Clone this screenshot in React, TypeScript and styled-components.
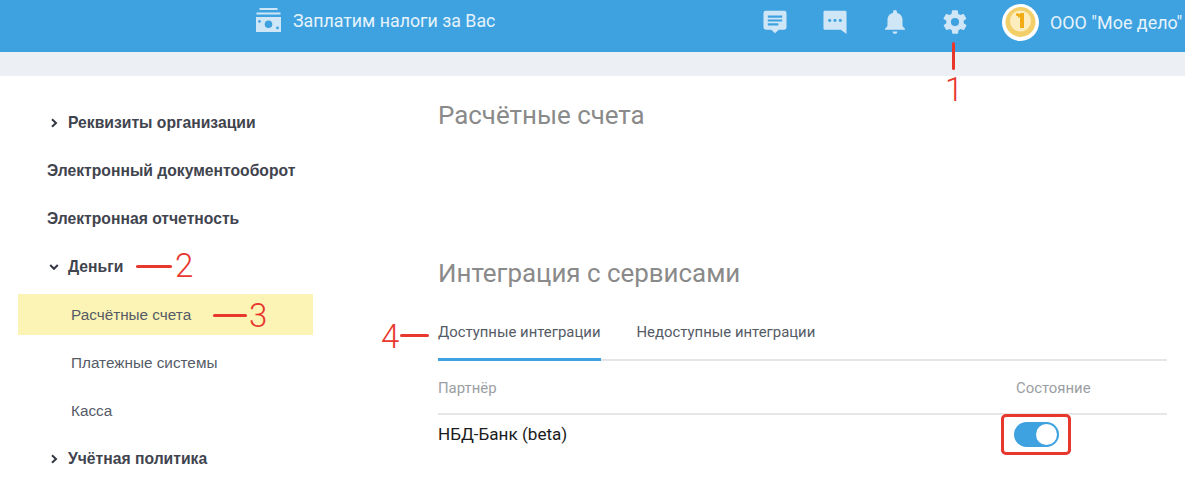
import React from "react";
import styled, { createGlobalStyle } from "styled-components";

const Global = createGlobalStyle`
  html, body { margin: 0; padding: 0; background: #fff; overflow: hidden; }
  body { font-family: "Liberation Sans", Arial, sans-serif; }
`;
const Page = styled.div`
  position: relative; width: 1185px; height: 485px; overflow: hidden; background: #fff;
`;
const Header = styled.header`
  height: 52px; background: #3ea2e0; display: flex; align-items: center; position: relative;
  box-sizing: border-box; padding-left: 256px; padding-bottom: 8px;
`;
const Promo = styled.div`
  display: flex; align-items: center; gap: 12px; width: 489px; flex: none; margin-bottom: 4px;
  color: #e6f3fb; font: 400 17.8px Roboto, sans-serif;
`;
const IconSlot = styled.div`
  width: 60px; display: flex; justify-content: center; align-items: center; height: 28px;
`;
const Icons = styled.div`
  display: flex; align-items: center;
`;
const Org = styled.div`
  display: flex; align-items: center; gap: 11px; margin-left: 17px; white-space: nowrap;
  color: #e6f3fb; font: 400 17.9px Roboto, sans-serif;
`;
const Strip = styled.div`
  height: 24px; background: #eceff3;
`;
const Body = styled.div`
  display: grid; grid-template-columns: 295px 729px; column-gap: 125px; padding-left: 18px;
`;
const Side = styled.nav`
  display: flex; flex-direction: column; padding-top: 23px;
`;
const NavRow = styled.div<{ $level: number; $active?: boolean; $caret?: boolean }>`
  height: 48px; display: flex; align-items: center; box-sizing: border-box;
  padding-left: ${(p) => (p.$level === 2 ? 53 : p.$caret ? 31 : 29)}px;
  color: ${(p) => (p.$level === 2 ? "#555b66" : "#3f444e")};
  font-size: ${(p) => (p.$level === 2 ? "15.3px" : "15.7px")};
  font-weight: ${(p) => (p.$level === 2 ? 400 : 700)};
  position: relative;
  ${(p) => p.$active && "&::before{content:'';position:absolute;left:0;right:0;top:3px;bottom:4px;background:#fbf4b5;} "}
  & > * { position: relative; }
`;
const Caret = styled.svg`
  width: 10px; height: 10px; margin-right: 9px; flex: none;
`;
const Main = styled.main`
  display: flex; flex-direction: column;
`;
const Title = styled.h2`
  margin: 0; font: 400 25.9px Roboto, sans-serif; color: #8a8a8a; line-height: 28px;
`;
const FirstTitle = styled(Title)`
  margin-top: 25px;
`;
const SecondTitle = styled(Title)`
  margin-top: 130px;
`;
const Tabs = styled.div`
  display: flex; gap: 36px; margin-top: 17px; border-bottom: 2px solid #e3e5e8; height: 57px; box-sizing: border-box;
`;
const Tab = styled.div<{ $active?: boolean }>`
  height: 57px; box-sizing: border-box; padding-top: 19px; font: 400 14.9px Roboto, sans-serif; color: #555b66;
  ${(p) => p.$active && "border-bottom: 3px solid #3ea2e0;"}
`;
const TableRow = styled.div<{ $head?: boolean }>`
  display: grid; grid-template-columns: 578px 1fr; align-items: center;
  height: ${(p) => (p.$head ? "54px" : "38px")};
  ${(p) => p.$head && "border-bottom: 2px solid #e6e7e9; box-sizing: border-box; padding-top: 2px; color: #9b9ea3; font: 400 14.9px Roboto, sans-serif;"}
`;
const Partner = styled.div`
  font: 400 17.1px Roboto, sans-serif; color: #1a1c20;
`;
const Toggle = styled.div`
  width: 45px; height: 25px; border-radius: 13px; background: #3ea2e0; position: relative; margin-left: -2px;
  &::after {
    content: ""; position: absolute; right: 2px; top: 2px; width: 21px; height: 21px; border-radius: 50%; background: #fff;
  }
`;
const Mark = styled.div`
  position: absolute; background: #e8382e; border-radius: 2px;
`;
const Line1 = styled(Mark)` left: 952px; top: 42px; width: 3px; height: 28px; `;
const Line2 = styled(Mark)` left: 136px; top: 265px; width: 36px; height: 3px; `;
const Line3 = styled(Mark)` left: 213px; top: 314px; width: 34px; height: 3px; `;
const Line4 = styled(Mark)` left: 400px; top: 334px; width: 29px; height: 3px; `;
const Num = styled.span<{ $x: number; $y: number }>`
  position: absolute; left: ${(p) => p.$x}px; top: ${(p) => p.$y}px;
  font: 300 33px/34px Roboto, sans-serif; color: #e8382e;
`;
const RedBox = styled.div`
  position: absolute; left: 1001px; top: 414px; width: 70px; height: 41px; box-sizing: border-box;
  border: 3px solid #e8382e; border-radius: 5px;
`;

const CaretRight = () => (
  <Caret viewBox="0 0 10 10"><path d="M3 1.2 7 5 3 8.8" fill="none" stroke="#333842" strokeWidth="2" /></Caret>
);
const CaretDown = () => (
  <Caret viewBox="0 0 10 10"><path d="M1.2 3 5 6.8 8.8 3" fill="none" stroke="#333842" strokeWidth="2" /></Caret>
);
const C = "#cfe6f6";

export default function App() {
  return (
    <Page>
      <Global />
      <Header>
        <Promo>
          <svg width="25" height="24" viewBox="0 0 25 24">
            <rect x="3.500" y="0" width="18" height="2" fill={C} />
            <rect x="0.500" y="4.500" width="24" height="2" fill={C} />
            <path fillRule="evenodd" fill={C} d="M0 9h25v15H0zM12.500 12.500a3.800 3.800 0 1 0 0 7.600 3.800 3.800 0 0 0 0-7.600zM3.500 12a1.400 1.400 0 1 0 0 2.800 1.400 1.400 0 0 0 0-2.800zM21.500 18.500a1.400 1.400 0 1 0 0 2.800 1.400 1.400 0 0 0 0-2.800z" />
          </svg>
          <span>Заплатим налоги за Вас</span>
        </Promo>
        <Icons>
          <IconSlot>
            <svg width="24" height="24" viewBox="0 0 25 28" preserveAspectRatio="none">
              <path fillRule="evenodd" fill={C} d="M3 1h19a2.500 2.500 0 0 1 2.500 2.500v17a2.500 2.500 0 0 1-2.500 2.500h-5.500l-4 4-4-4H3a2.500 2.500 0 0 1-2.500-2.500v-17A2.500 2.500 0 0 1 3 1zM5 6.500v2.500h15V6.500zM5 11v2.500h15V11zM5 15.500V18h11v-2.500z" />
            </svg>
          </IconSlot>
          <IconSlot>
            <svg width="24" height="24" viewBox="0 0 25 28" preserveAspectRatio="none">
              <path fillRule="evenodd" fill={C} d="M2 1h21a1.500 1.500 0 0 1 1.500 1.500V28l-6-5H2a1.500 1.500 0 0 1-1.500-1.500v-19A1.500 1.500 0 0 1 2 1zM7 10.500a1.700 1.700 0 1 0 0 3.400 1.700 1.700 0 0 0 0-3.400zM12.500 10.500a1.700 1.700 0 1 0 0 3.400 1.700 1.700 0 0 0 0-3.400zM18 10.500a1.700 1.700 0 1 0 0 3.400 1.700 1.700 0 0 0 0-3.400z" />
            </svg>
          </IconSlot>
          <IconSlot>
            <svg width="20" height="24" viewBox="0 0 20 25" preserveAspectRatio="none">
              <path fill={C} d="M10 0a2 2 0 0 1 2 2v1c3.500.8 5.500 3.500 5.500 7.500v5c0 1.500 1 2.500 2.500 4v1H0v-1c1.500-1.500 2.500-2.500 2.500-4v-5C2.500 6.500 4.500 3.800 8 3V2a2 2 0 0 1 2-2zM7.500 22.500h5a2.500 2.500 0 0 1-5 0z" />
            </svg>
          </IconSlot>
          <IconSlot>
            <svg width="28" height="28" viewBox="0 0 24 24">
              <path fill={C} fillRule="evenodd" d="M19.400 13c.1-.3.1-.7.1-1s0-.7-.1-1l2.100-1.600c.2-.2.2-.4.1-.6l-2-3.500c-.1-.2-.4-.3-.6-.2l-2.500 1c-.5-.4-1.100-.7-1.700-1l-.4-2.700c0-.2-.2-.4-.5-.4h-4c-.3 0-.5.2-.5.4l-.4 2.700c-.6.3-1.200.6-1.700 1l-2.500-1c-.2-.1-.5 0-.6.2l-2 3.500c-.1.2-.1.4.1.6L4.600 11c-.1.3-.1.7-.1 1s0 .7.1 1l-2.100 1.600c-.2.2-.2.4-.1.6l2 3.500c.1.2.4.3.6.2l2.500-1c.5.4 1.100.7 1.700 1l.4 2.700c0 .2.2.4.5.4h4c.3 0 .5-.2.5-.4l.4-2.700c.6-.3 1.200-.6 1.700-1l2.500 1c.2.1.5 0 .6-.2l2-3.500c.1-.2.1-.4-.1-.6zM12 15.500a3.500 3.500 0 1 1 0-7 3.500 3.500 0 0 1 0 7z" />
            </svg>
          </IconSlot>
        </Icons>
        <Org>
          <svg width="37" height="37" viewBox="0 0 37 37" style={{ flex: "none" }}>
            <circle cx="18.500" cy="18.500" r="18.500" fill="#fff" />
            <circle cx="18.500" cy="18" r="15" fill="#f3cf6a" />
            <circle cx="18.500" cy="17" r="10.500" fill="#fbedbd" />
            <path d="M18.500 9h3.500v15h-4V13l-2 .8 0-1.800a1.500 1.500 0 0 1-2-1.500 1.500 1.500 0 0 1 3 0z" fill="#f0ac12" />
          </svg>
          <span>ООО "Мое дело"</span>
        </Org>
      </Header>
      <Strip />
      <Body>
        <Side>
          <NavRow $level={1} $caret><CaretRight /><span>Реквизиты организации</span></NavRow>
          <NavRow $level={1}><span>Электронный документооборот</span></NavRow>
          <NavRow $level={1}><span>Электронная отчетность</span></NavRow>
          <NavRow $level={1} $caret><CaretDown /><span>Деньги</span></NavRow>
          <NavRow $level={2} $active><span>Расчётные счета</span></NavRow>
          <NavRow $level={2}><span>Платежные системы</span></NavRow>
          <NavRow $level={2}><span>Касса</span></NavRow>
          <NavRow $level={1} $caret><CaretRight /><span>Учётная политика</span></NavRow>
        </Side>
        <Main>
          <FirstTitle>Расчётные счета</FirstTitle>
          <SecondTitle>Интеграция с сервисами</SecondTitle>
          <Tabs>
            <Tab $active>Доступные интеграции</Tab>
            <Tab>Недоступные интеграции</Tab>
          </Tabs>
          <TableRow $head><span>Партнёр</span><span>Состояние</span></TableRow>
          <TableRow><Partner>НБД-Банк (beta)</Partner><Toggle /></TableRow>
        </Main>
      </Body>
      <Line1 /><Num $x={945} $y={73}>1</Num>
      <Line2 /><Num $x={175} $y={249}>2</Num>
      <Line3 /><Num $x={249} $y={299}>3</Num>
      <Line4 /><Num $x={381} $y={320}>4</Num>
      <RedBox />
    </Page>
  );
}
